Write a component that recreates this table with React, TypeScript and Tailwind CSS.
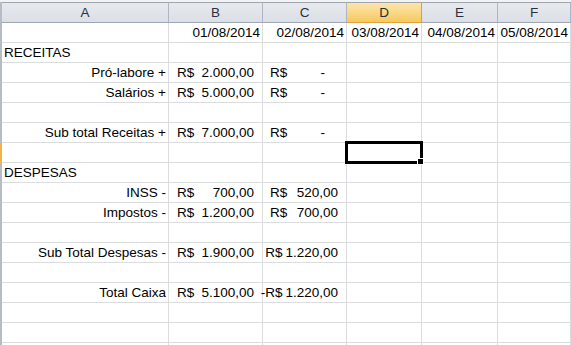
import React from 'react';

type CellDef = {
  text?: string;
  align?: 'left' | 'right';
  money?: string;
  dash?: boolean;
  tight?: string;
};

type RowDef = {
  a?: CellDef;
  b?: CellDef;
  c?: CellDef;
  d?: CellDef;
  e?: CellDef;
  f?: CellDef;
};

const columns = ['A', 'B', 'C', 'D', 'E', 'F'];

const rows: RowDef[] = [
  {
    b: { text: '01/08/2014', align: 'right' },
    c: { text: '02/08/2014', align: 'right' },
    d: { text: '03/08/2014', align: 'right' },
    e: { text: '04/08/2014', align: 'right' },
    f: { text: '05/08/2014', align: 'right' },
  },
  { a: { text: 'RECEITAS', align: 'left' } },
  { a: { text: 'Pró-labore +', align: 'right' }, b: { money: '2.000,00' }, c: { dash: true } },
  { a: { text: 'Salários +', align: 'right' }, b: { money: '5.000,00' }, c: { dash: true } },
  {},
  { a: { text: 'Sub total Receitas +', align: 'right' }, b: { money: '7.000,00' }, c: { dash: true } },
  {},
  { a: { text: 'DESPESAS', align: 'left' } },
  { a: { text: 'INSS -', align: 'right' }, b: { money: '700,00' }, c: { money: '520,00' } },
  { a: { text: 'Impostos -', align: 'right' }, b: { money: '1.200,00' }, c: { money: '700,00' } },
  {},
  { a: { text: 'Sub Total Despesas -', align: 'right' }, b: { money: '1.900,00' }, c: { tight: 'R$', money: '1.220,00' } },
  {},
  { a: { text: 'Total Caixa', align: 'right' }, b: { money: '5.100,00' }, c: { tight: '-R$', money: '1.220,00' } },
  {},
  {},
  {},
];

const SELECTED_ROW = 6;

const Cell = ({ cell, col, selected }: { cell?: CellDef; col: string; selected?: boolean }) => {
  const isB = col === 'B';
  return (
    <div className="relative h-[20px] border-r border-b border-[#dadcdd] flex items-center overflow-visible whitespace-nowrap">
      {cell?.money && !cell.tight && (
        <div className={`flex w-full justify-between ${isB ? 'pl-[8px] pr-[8px]' : 'pl-[7px] pr-[8px]'}`}>
          <span>R$</span>
          <span>{cell.money}</span>
        </div>
      )}
      {cell?.tight && (
        <div className="flex w-full justify-end gap-[3px] pr-[8px]">
          <span>{cell.tight}</span>
          <span>{cell.money}</span>
        </div>
      )}
      {cell?.dash && (
        <div className="flex w-full justify-between pl-[7px] pr-[21px]">
          <span>R$</span>
          <span>-</span>
        </div>
      )}
      {cell?.text && (
        <div className={`w-full ${cell.align === 'right' ? 'text-right pr-[2px]' : 'text-left pl-[2px]'}`}>
          {cell.text}
        </div>
      )}
      {selected && (
        <div className="absolute -left-[2px] -top-[2px] w-[78px] h-[23px] border-[3px] border-black z-10">
          <div className="absolute -right-[4px] -bottom-[4px] w-[7px] h-[7px] bg-black border border-white"></div>
        </div>
      )}
    </div>
  );
};

const App = () => {
  return (
    <div
      className="w-[571px] h-[345px] overflow-hidden bg-white text-[13.5px] leading-[19px] text-black"
      style={{ fontFamily: '"Liberation Sans", Arial, sans-serif' }}
    >
      <div className="h-[2px] bg-[#f3f3f3]"></div>
      <div className="grid grid-cols-[2px_167px_94px_84px_75px_76px_1fr]">
        {/* column headers */}
        <div className="h-[21px] bg-[#b5bcc6]"></div>
        {columns.map((col) => (
          <div
            key={col}
            className={`h-[21px] flex items-center justify-center border-t border-r border-b ${
              col === 'D'
                ? 'bg-linear-to-b from-[#fce6ab] to-[#f6c95e] border-t-[#9ea5ae] border-r-[#d8a04a] border-b-[#e5a23c] text-[#1f2d3d]'
                : 'bg-linear-to-b from-[#e6e9ee] to-[#dce0e6] border-t-[#9ea5ae] border-r-[#aeb6c1] border-b-[#9ea8b5] text-[#27323f]'
            }`}
          >
            {col}
          </div>
        ))}

        {/* data rows */}
        {rows.map((row, i) => (
          <React.Fragment key={i}>
            <div className={`h-[20px] ${i === SELECTED_ROW ? 'bg-[#f1b24a]' : 'bg-[#b5bcc6]'}`}></div>
            <Cell cell={row.a} col="A" />
            <Cell cell={row.b} col="B" />
            <Cell cell={row.c} col="C" />
            <Cell cell={row.d} col="D" selected={i === SELECTED_ROW} />
            <Cell cell={row.e} col="E" />
            <Cell cell={row.f} col="F" />
          </React.Fragment>
        ))}
      </div>
    </div>
  );
};

export default App;
